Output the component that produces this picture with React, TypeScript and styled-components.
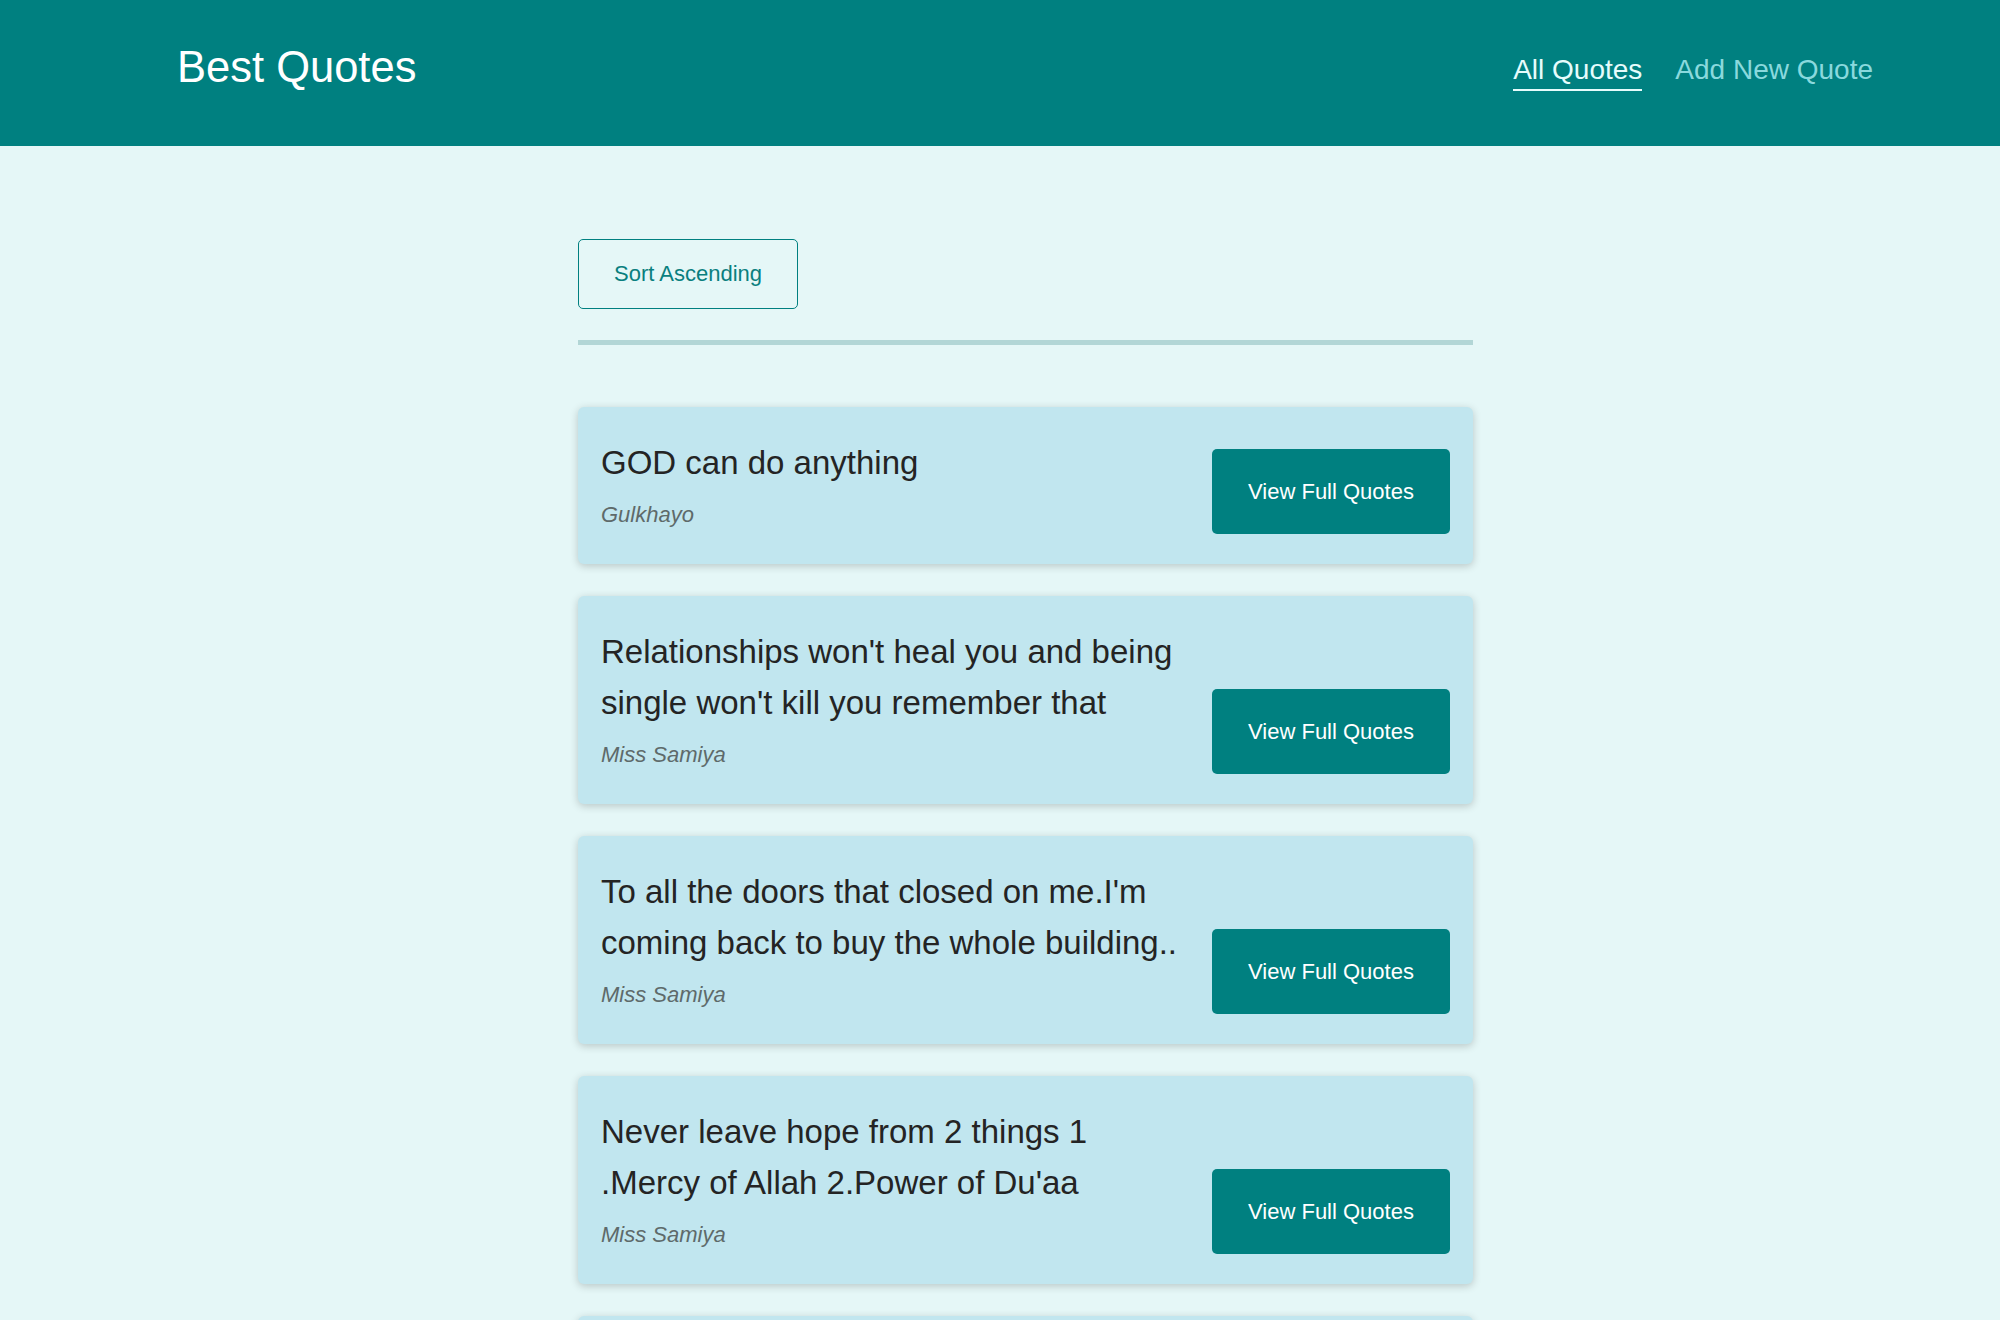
import React from "react";
import styled, { createGlobalStyle } from "styled-components";

const GlobalStyle = createGlobalStyle`
  * {
    box-sizing: border-box;
  }

  body {
    margin: 0;
    background: #e5f7f7;
    font-family: "Liberation Sans", Arial, sans-serif;
  }
`;

const Header = styled.header`
  height: 146px;
  background: #008080;
  display: flex;
  justify-content: space-between;
  align-items: center;
  padding: 0 127px 12px 177px;
`;

const Logo = styled.h1`
  margin: 0;
  font-size: 43.5px;
  font-weight: 400;
  color: #ffffff;
`;

const Nav = styled.nav`
  padding-top: 10px;
`;

const NavList = styled.ul`
  list-style: none;
  margin: 0;
  padding: 0;
  display: flex;
  gap: 33px;
`;

const NavLink = styled.a<{ $active?: boolean }>`
  display: block;
  font-size: 28px;
  text-decoration: none;
  cursor: pointer;
  padding-bottom: 3px;
  color: ${(props) => (props.$active ? "#e6fcfc" : "#8ad9dd")};
  border-bottom: 2px solid
    ${(props) => (props.$active ? "#e6fcfc" : "transparent")};
`;

const Main = styled.main`
  width: 895px;
  margin: 93px 0 0 578px;
`;

const Sorting = styled.div`
  padding-bottom: 31px;
  border-bottom: 5px solid #b2d6d6;
`;

const SortButton = styled.button`
  height: 70px;
  padding: 0 35px;
  background: transparent;
  border: 1px solid #008080;
  border-radius: 5px;
  color: #0a7f7f;
  font-family: inherit;
  font-size: 22px;
  cursor: pointer;
`;

const QuoteList = styled.ul`
  list-style: none;
  margin: 62px 0 0;
  padding: 0;
  display: flex;
  flex-direction: column;
  gap: 32px;
`;

const QuoteCard = styled.li`
  display: flex;
  align-items: flex-end;
  gap: 20px;
  padding: 30px 23px;
  background: #c1e6ef;
  border-radius: 6px;
  box-shadow: 0 2px 8px rgba(0, 0, 0, 0.2);
`;

const QuoteBody = styled.figure`
  flex: 1;
  margin: 0;
  padding-bottom: 4px;
`;

const QuoteText = styled.blockquote`
  margin: 0;
  font-size: 33px;
  line-height: 51px;
  color: #242424;
`;

const QuoteAuthor = styled.figcaption`
  margin-top: 12px;
  font-size: 22px;
  line-height: 30px;
  font-style: italic;
  color: #5e6a6a;
`;

const ViewButton = styled.a`
  flex-shrink: 0;
  width: 238px;
  height: 85px;
  display: flex;
  align-items: center;
  justify-content: center;
  background: #008080;
  border-radius: 5px;
  color: #ffffff;
  font-size: 22px;
  text-decoration: none;
  cursor: pointer;
`;

const quotes = [
  { id: "q1", text: "GOD can do anything", author: "Gulkhayo" },
  {
    id: "q2",
    text: "Relationships won't heal you and being single won't kill you remember that",
    author: "Miss Samiya",
  },
  {
    id: "q3",
    text: "To all the doors that closed on me.I'm coming back to buy the whole building..",
    author: "Miss Samiya",
  },
  {
    id: "q4",
    text: "Never leave hope from 2 things 1 .Mercy of Allah 2.Power of Du'aa",
    author: "Miss Samiya",
  },
  {
    id: "q5",
    text: "Be kind, for everyone you meet is fighting a hard battle",
    author: "Miss Samiya",
  },
];

const App: React.FC = () => {
  return (
    <>
      <GlobalStyle />
      <Header>
        <Logo>Best Quotes</Logo>
        <Nav>
          <NavList>
            <li>
              <NavLink $active>All Quotes</NavLink>
            </li>
            <li>
              <NavLink>Add New Quote</NavLink>
            </li>
          </NavList>
        </Nav>
      </Header>

      <Main>
        <Sorting>
          <SortButton>Sort Ascending</SortButton>
        </Sorting>

        <QuoteList>
          {quotes.map((quote) => (
            <QuoteCard key={quote.id}>
              <QuoteBody>
                <QuoteText>{quote.text}</QuoteText>
                <QuoteAuthor>{quote.author}</QuoteAuthor>
              </QuoteBody>
              <ViewButton>View Full Quotes</ViewButton>
            </QuoteCard>
          ))}
        </QuoteList>
      </Main>
    </>
  );
};

export default App;
